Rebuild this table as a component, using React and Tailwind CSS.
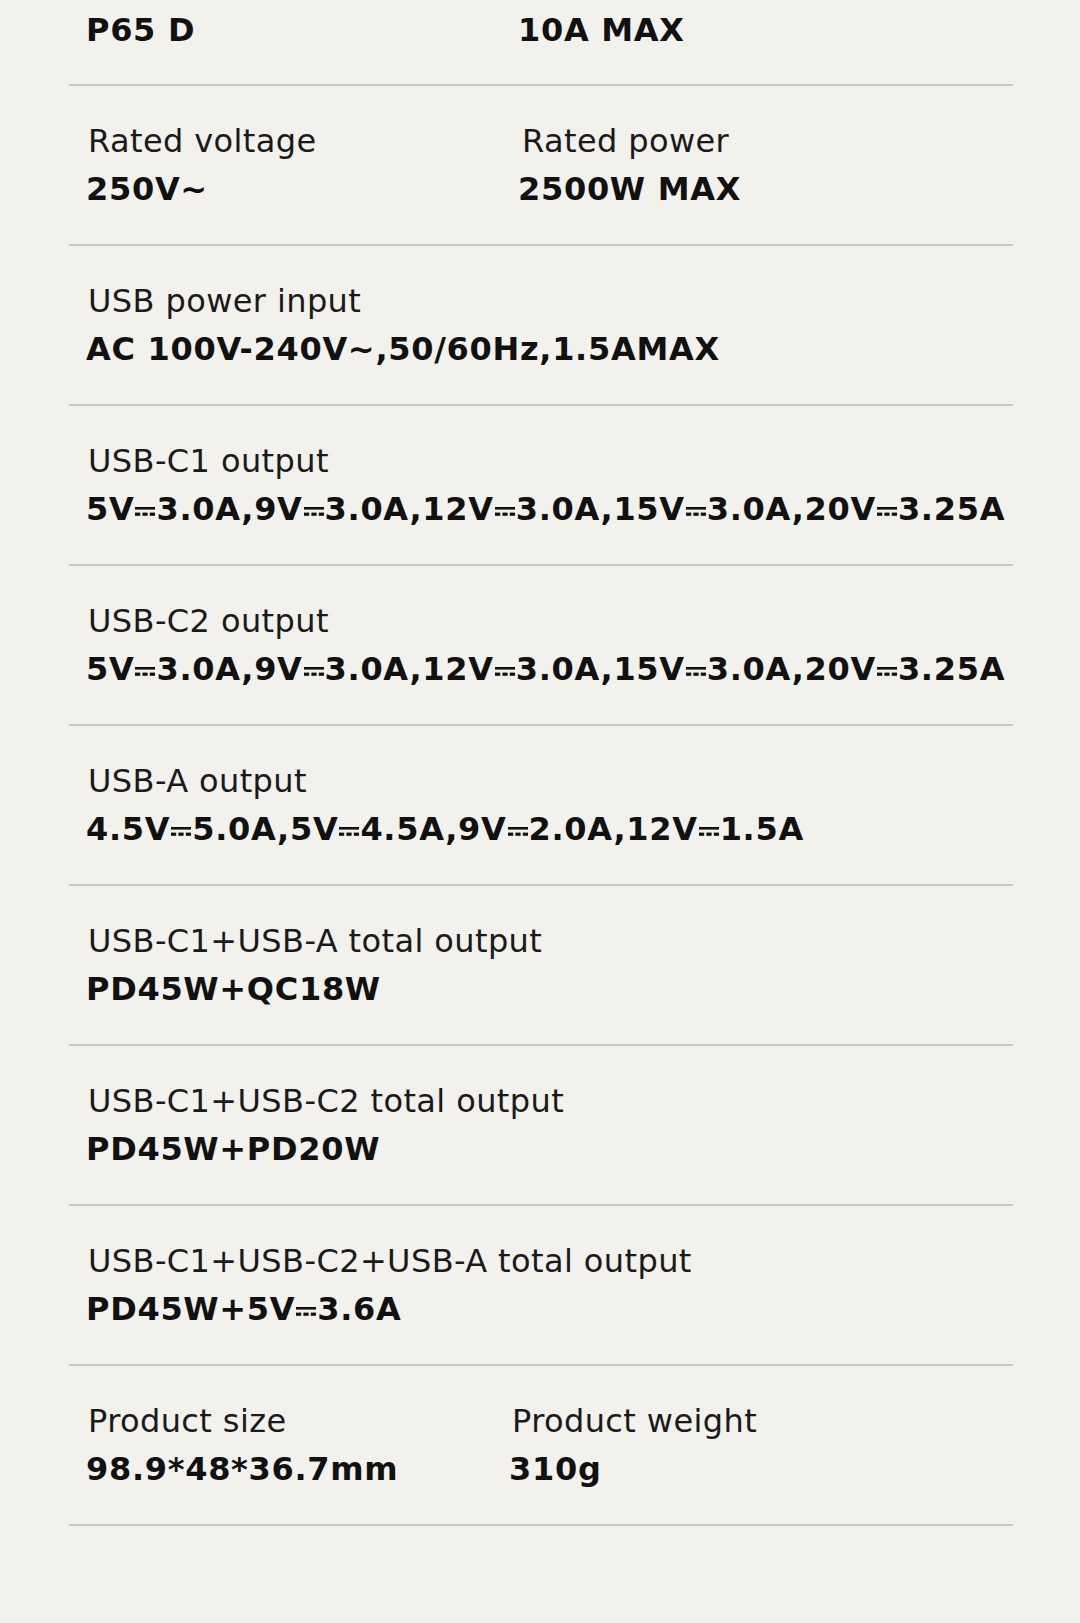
import React from "react";

const Sym = () => (
  <svg
    width="20"
    height="9"
    viewBox="0 0 20 9"
    className="inline-block mx-[1px] align-[4px]"
    fill="currentColor"
  >
    <rect x="0" y="0" width="20" height="2.6" />
    <rect x="0" y="5.6" width="5.2" height="3.2" />
    <rect x="7.4" y="5.6" width="5.2" height="3.2" />
    <rect x="14.8" y="5.6" width="5.2" height="3.2" />
  </svg>
);

const Val = ({ text }) => {
  const parts = text.split("⎓");
  return (
    <div className="mt-[8px] h-[40px] leading-[40px] text-[32px] font-bold tracking-[0.7px] whitespace-nowrap text-[#111]">
      {parts.map((p, i) => (
        <React.Fragment key={i}>
          {i > 0 && <Sym />}
          {p}
        </React.Fragment>
      ))}
    </div>
  );
};

const Label = ({ text }) => (
  <div className="pl-[2px] h-[40px] leading-[40px] text-[32px] font-normal tracking-[0.4px] whitespace-nowrap text-[#1a1a1a]">
    {text}
  </div>
);

const Cell = ({ label, value }) => (
  <div>
    <Label text={label} />
    <Val text={value} />
  </div>
);

const Row = ({ children }) => (
  <div className="pt-[35px] pb-[35px] border-b-2 border-[#c9c7c2] pl-[17px] pr-4">{children}</div>
);

export default function App() {
  return (
    <div
      className="w-[1080px] min-h-[1623px] bg-[#f2f1ec] overflow-hidden"
      style={{ fontFamily: '"DejaVu Sans", Verdana, sans-serif' }}
    >
      <div className="ml-[69px] w-[944px]">
        <div className="pt-[10px] pb-[34px] border-b-2 border-[#c9c7c2] pl-[17px] pr-4 flex">
          <div className="w-[432px] h-[40px] leading-[40px] text-[32px] font-bold tracking-[0.7px] text-[#111]">P65 D</div>
          <div className="h-[40px] leading-[40px] text-[32px] font-bold tracking-[0.7px] text-[#111]">10A MAX</div>
        </div>
        <Row>
          <div className="flex">
            <div className="w-[432px]">
              <Cell label="Rated voltage" value="250V~" />
            </div>
            <div className="[&>div>div:first-child]:pl-[4px]">
              <Cell label="Rated power" value="2500W MAX" />
            </div>
          </div>
        </Row>
        <Row>
          <Cell label="USB power input" value="AC 100V-240V~,50/60Hz,1.5AMAX" />
        </Row>
        <Row>
          <Cell label="USB-C1 output" value="5V⎓3.0A,9V⎓3.0A,12V⎓3.0A,15V⎓3.0A,20V⎓3.25A" />
        </Row>
        <Row>
          <Cell label="USB-C2 output" value="5V⎓3.0A,9V⎓3.0A,12V⎓3.0A,15V⎓3.0A,20V⎓3.25A" />
        </Row>
        <Row>
          <Cell label="USB-A output" value="4.5V⎓5.0A,5V⎓4.5A,9V⎓2.0A,12V⎓1.5A" />
        </Row>
        <Row>
          <Cell label="USB-C1+USB-A total output" value="PD45W+QC18W" />
        </Row>
        <Row>
          <Cell label="USB-C1+USB-C2 total output" value="PD45W+PD20W" />
        </Row>
        <Row>
          <Cell label="USB-C1+USB-C2+USB-A total output" value="PD45W+5V⎓3.6A" />
        </Row>
        <Row>
          <div className="flex">
            <div className="w-[423px]">
              <Cell label="Product size" value="98.9*48*36.7mm" />
            </div>
            <div className="[&>div>div:first-child]:pl-[3px]">
              <Cell label="Product weight" value="310g" />
            </div>
          </div>
        </Row>
      </div>
    </div>
  );
}
